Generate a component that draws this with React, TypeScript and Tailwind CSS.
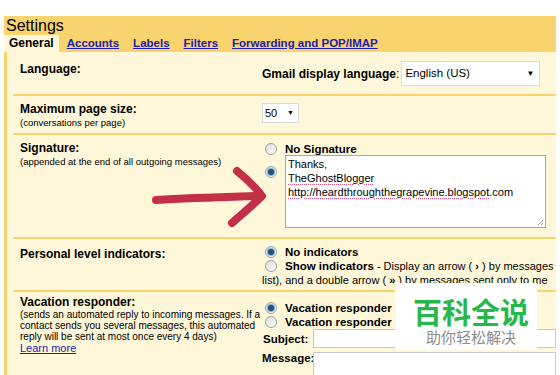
import React from 'react'

const font = { fontFamily: '"Liberation Sans", Arial, sans-serif' }

function Radio({ checked }: { checked?: boolean }) {
  return (
    <span className="inline-flex h-[12px] w-[12px] shrink-0 items-center justify-center rounded-full border border-[#a0a0a0] bg-gradient-to-br from-[#dcdcdc] to-[#ffffff]">
      {checked && <span className="h-[6px] w-[6px] rounded-full bg-[#24507a] ring-1 ring-[#7fb0d8]" />}
    </span>
  )
}

function Spell({ children }: { children: React.ReactNode }) {
  return <span className="underline decoration-dotted decoration-[#e0507a] underline-offset-2">{children}</span>
}

function Row({ className, left, children }: { className: string; left: React.ReactNode; children?: React.ReactNode }) {
  return (
    <div className={`relative ml-[6px] grid grid-cols-[249px_1fr] border-b-2 border-[#f9d36d] ${className}`}>
      <div className="pl-[7px]">{left}</div>
      <div className="min-w-0">{children}</div>
    </div>
  )
}

export default function App() {
  return (
    <div className="relative h-[375px] w-[560px] overflow-hidden bg-white pt-[16px]" style={font}>
      <div className="mx-[4px] w-[552px] overflow-hidden">
        {/* header */}
        <div className="bg-[#f9d36d]">
          <div className="pl-[2px] text-[16px] leading-[19px] text-black">Settings</div>
          <div className="flex h-[17px] items-end font-bold leading-[17px]">
            <div className="h-[17px] bg-[#fff7d9] px-[5px] text-[12px] text-black">General</div>
            <a className="ml-[8px] text-[11.5px] text-[#2020b0] underline">Accounts</a>
            <a className="ml-[14px] text-[11.5px] text-[#2020b0] underline">Labels</a>
            <a className="ml-[14px] text-[11.5px] text-[#2020b0] underline">Filters</a>
            <a className="ml-[14px] text-[11.5px] text-[#2020b0] underline">Forwarding and POP/IMAP</a>
          </div>
        </div>

        {/* content */}
        <div className="border-l-[3px] border-[#f9d36d] bg-[#fff7d9] text-black">
          <Row
            className="h-[44px]"
            left={<div className="pt-[8px] text-[12px] font-bold">Language:</div>}
          >
            <div className="flex items-center pt-[9px] text-[12px]">
              <span className="font-bold">Gmail display language</span>
              <span>:</span>
              <div className="ml-[2px] flex h-[25px] w-[139px] items-center justify-between border border-[#dcdcdc] bg-white pl-[3px] pr-[5px]">
                <span className="text-[11.5px]">English (US)</span>
                <span className="text-[8px]">▼</span>
              </div>
            </div>
          </Row>

          <Row
            className="h-[39px]"
            left={
              <div className="pt-[7px] leading-[13px]">
                <div className="text-[12px] font-bold">Maximum page size:</div>
                <div className="text-[9.5px]">(conversations per page)</div>
              </div>
            }
          >
            <div className="pt-[7px]">
              <div className="flex h-[20px] w-[37px] items-center justify-between border border-[#dcdcdc] bg-white pl-[2px] pr-[4px] text-[11px]">
                <span>50</span>
                <span className="text-[7px]">▼</span>
              </div>
            </div>
          </Row>

          <Row
            className="h-[104px]"
            left={
              <div className="pt-[7px] leading-[13px]">
                <div className="text-[12px] font-bold">Signature:</div>
                <div className="text-[9.5px]">(appended at the end of all outgoing messages)</div>
              </div>
            }
          >
            <div className="pt-[7px]">
              <div className="flex items-center gap-[8px] pl-[3px]">
                <Radio />
                <span className="text-[11.5px] font-bold leading-[14px]">No Signature</span>
              </div>
              <div className="mt-[-1px] flex gap-[8px] pl-[3px]">
                <div className="pt-[3px]"><Radio checked /></div>
                <div className="relative h-[73px] w-[261px] border border-[#a8a8a8] bg-white px-[2px] pt-[1px] text-[11px] leading-[14px]">
                  <div>Thanks,</div>
                  <div><Spell>TheGhostBlogger</Spell></div>
                  <div><Spell>http://heardthroughthegrapevine.blogspot</Spell>.com</div>
                  <svg className="absolute bottom-[1px] right-[1px]" width="7" height="7" viewBox="0 0 7 7">
                    <path d="M6 1 L1 6 M6 4 L4 6" stroke="#9a9a9a" strokeWidth="1" />
                  </svg>
                </div>
              </div>
            </div>
            <svg className="pointer-events-none absolute left-0 top-0" width="260" height="104" viewBox="0 0 260 104">
              <path d="M143 65 C180 63 215 62 246 61" stroke="#c22f47" strokeWidth="8" fill="none" strokeLinecap="round" />
              <path d="M224 36 C236 46 244 54 249 61 C240 70 229 79 219 88" stroke="#c22f47" strokeWidth="8" fill="none" strokeLinecap="round" strokeLinejoin="round" />
            </svg>
          </Row>

          <Row
            className="h-[53px]"
            left={<div className="pt-[6px] text-[12px] font-bold">Personal level indicators:</div>}
          >
            <div className="overflow-hidden whitespace-nowrap pt-[6px] text-[11px] leading-[14px]">
              <div className="flex items-center gap-[8px] pl-[3px]">
                <Radio checked />
                <span className="text-[11.5px] font-bold">No indicators</span>
              </div>
              <div className="flex items-center gap-[8px] pl-[3px]">
                <Radio />
                <span>
                  <span className="text-[11.5px] font-bold">Show indicators</span> - Display an arrow ( <b>›</b> ) by messages
                </span>
              </div>
              <div>list), and a double arrow ( <b>»</b> ) by messages sent only to me</div>
            </div>
          </Row>

          <Row
            className="h-[90px] border-b-0"
            left={
              <div className="pt-[4px]">
                <div className="text-[12px] font-bold leading-[13px]">Vacation responder:</div>
                <div className="text-[10px] leading-[11px]">
                  (sends an automated reply to incoming messages. If a contact sends you several messages, this automated reply will be sent at most once every 4 days)
                </div>
                <a className="block text-[11px] leading-[13px] text-[#2020b0] underline">Learn more</a>
              </div>
            }
          >
            <div className="whitespace-nowrap pt-[9px] text-[11.5px] font-bold leading-[14px]">
              <div className="flex items-center gap-[8px] pl-[3px]">
                <Radio checked />
                <span>Vacation responder off</span>
              </div>
              <div className="flex items-center gap-[8px] pl-[3px]">
                <Radio />
                <span>Vacation responder on</span>
              </div>
              <div className="flex items-center">
                <span className="w-[51px] pl-[1px]">Subject:</span>
                <div className="h-[19px] flex-1 border border-[#c8c8c8] bg-white" />
              </div>
              <div className="mt-[4px] flex items-start">
                <span className="w-[51px] leading-[12px]">Message:</span>
                <div className="h-[40px] flex-1 border border-[#c8c8c8] bg-white" />
              </div>
            </div>
          </Row>
        </div>
      </div>

      {/* watermark */}
      <div className="absolute left-[395px] top-[283px] flex h-[67px] w-[142px] flex-col items-center bg-white pt-[12px]" style={{ fontFamily: '"Noto Sans CJK SC", sans-serif' }}>
        <div className="pl-[10px] text-[29px] font-bold leading-[32px] text-[#27b84b]">百科全说</div>
        <div className="pl-[10px] text-[15px] leading-[20px] text-[#8c8c8c]">助你轻松解决</div>
      </div>
    </div>
  )
}
